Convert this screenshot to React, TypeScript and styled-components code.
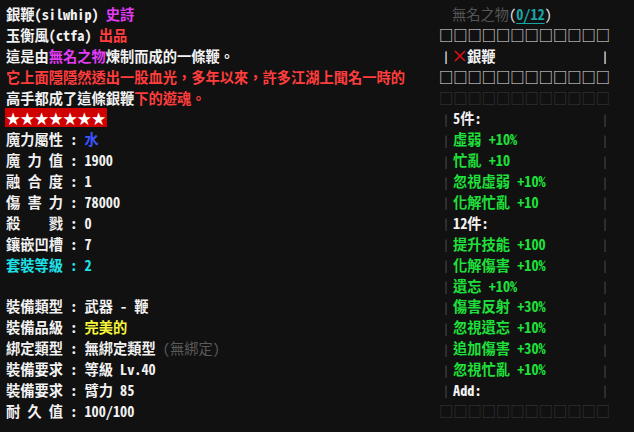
import React from "react";
import styled, { createGlobalStyle } from "styled-components";

const Global = createGlobalStyle`
  html, body { margin: 0; padding: 0; background: #111111; }
  body { width: 634px; height: 432px; overflow: hidden; }
`;

const Page = styled.div`
  display: grid;
  grid-template-columns: 433px 171px;
  padding: 4px 0 0 6px;
  font-family: "Noto Sans Mono CJK TC", "Noto Sans CJK TC", "DejaVu Sans Mono", monospace;
  font-size: 14.25px;
  font-weight: 700;
  color: #f2f2f2;
`;

const Column = styled.div`
  display: flex;
  flex-direction: column;
`;

const Line = styled.div`
  height: 20.9px;
  line-height: 20.9px;
  white-space: pre;
`;

const C = styled.span<{ $c: string; $w?: number }>`
  color: ${(p) => p.$c};
  font-weight: ${(p) => p.$w ?? 700};
`;

const Stars = styled.span`
  display: inline-block;
  background: #d10000;
  color: #ffffff;
  line-height: 19px;
  margin-left: -1px;
  padding: 0 1px;
`;

const Title = styled(Line)`
  padding-left: 13px;
  font-weight: 400;
  color: #555555;
`;

const Count = styled.span`
  color: #1aa5a5;
  font-weight: 700;
  text-decoration: underline;
  text-underline-offset: 3px;
`;

const Boxes = styled(Line)<{ $dim?: boolean }>`
  color: ${(p) => (p.$dim ? "#3a3a3a" : "#e6e6e6")};
  font-weight: 400;
`;

const Framed = styled(Line)`
  display: flex;
  align-items: center;
  justify-content: space-between;
  padding: 0 2px 0 4px;
`;

const Pipe = styled.span<{ $bright?: boolean }>`
  display: inline-block;
  width: 6px;
  text-align: center;
  font-size: 11px;
  line-height: 12px;
  font-weight: 700;
  color: ${(p) => (p.$bright ? "#f2f2f2" : "#3d4552")};
`;

const Content = styled.span`
  flex: 1;
  padding-left: 4px;
  display: flex;
  align-items: center;
`;

const Cross = styled.svg`
  width: 12px;
  height: 12px;
  margin: 0 1px 0 1px;
`;

const green = "#1fe03a";
const red = "#ff3d3d";

const setLines: { t: React.ReactNode; c?: string }[] = [
  { t: "5件:" },
  { t: "虛弱 +10%", c: green },
  { t: "忙亂 +10", c: green },
  { t: "忽視虛弱 +10%", c: green },
  { t: "化解忙亂 +10", c: green },
  { t: "12件:" },
  { t: "提升技能 +100", c: green },
  { t: "化解傷害 +10%", c: green },
  { t: "遺忘 +10%", c: green },
  { t: "傷害反射 +30%", c: green },
  { t: "忽視遺忘 +10%", c: green },
  { t: "追加傷害 +30%", c: green },
  { t: "忽視忙亂 +10%", c: green },
  { t: "Add:" },
];

const BOX = "□□□□□□□□□□□□";

export default function App() {
  return (
    <>
      <Global />
      <Page>
        <Column>
          <Line>
            銀鞭(silwhip) <C $c="#e33cf5">史詩</C>
          </Line>
          <Line>
            玉衡風(ctfa) <C $c={red}>出品</C>
          </Line>
          <Line>
            這是由<C $c="#e33cf5">無名之物</C>煉制而成的一條鞭。
          </Line>
          <Line>
            <C $c={red}>它上面隱隱然透出一股血光，多年以來，許多江湖上聞名一時的</C>
          </Line>
          <Line>
            高手都成了這條銀鞭<C $c={red}>下的遊魂。</C>
          </Line>
          <Line>
            <Stars>★★★★★★★</Stars>
          </Line>
          <Line>
            魔力屬性 : <C $c="#3b55ff">水</C>
          </Line>
          <Line>魔 力 值 : 1900</Line>
          <Line>融 合 度 : 1</Line>
          <Line>傷 害 力 : 78000</Line>
          <Line>殺    戮 : 0</Line>
          <Line>鑲嵌凹槽 : 7</Line>
          <Line>
            <C $c="#1ee2ea">套裝等級 : 2</C>
          </Line>
          <Line> </Line>
          <Line>裝備類型 : 武器 - 鞭</Line>
          <Line>
            裝備品級 : <C $c="#f5f53a">完美的</C>
          </Line>
          <Line>
            綁定類型 : 無綁定類型 <C $c="#5a5a5a" $w={400}>(無綁定)</C>
          </Line>
          <Line>裝備要求 : 等級 Lv.40</Line>
          <Line>裝備要求 : 臂力 85</Line>
          <Line>耐 久 值 : 100/100</Line>
        </Column>
        <Column>
          <Title>
            無名之物<C $c="#e8e8e8" $w={400}>(</C>
            <Count>0/12</Count>
            <C $c="#e8e8e8" $w={400}>)</C>
          </Title>
          <Boxes>{BOX}</Boxes>
          <Framed>
            <Pipe $bright>|</Pipe>
            <Content>
              <Cross viewBox="0 0 12 12">
                <path d="M1 1 L11 11 M11 1 L1 11" stroke="#e01010" strokeWidth="1.6" fill="none" />
              </Cross>
              銀鞭
            </Content>
            <Pipe $bright>|</Pipe>
          </Framed>
          <Boxes>{BOX}</Boxes>
          <Boxes $dim>{BOX}</Boxes>
          {setLines.map((l, i) => (
            <Framed key={i}>
              <Pipe>|</Pipe>
              <Content>{l.c ? <C $c={l.c}>{l.t}</C> : l.t}</Content>
              <Pipe>|</Pipe>
            </Framed>
          ))}
          <Boxes $dim>{BOX}</Boxes>
        </Column>
      </Page>
    </>
  );
}
